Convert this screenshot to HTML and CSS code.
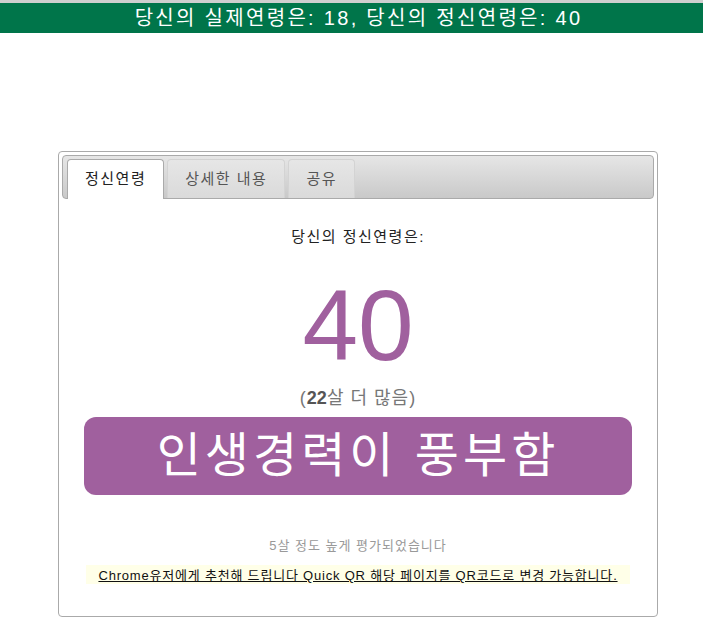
FILE: index.html
```html
<!DOCTYPE html>
<html lang="ko">
<head>
  <meta charset="UTF-8">
  <title>정신연령 테스트 결과</title>
  <link rel="stylesheet" href="styles.css">
</head>
<body>

<div class="topbar">당신의 실제연령은: 18, 당신의 정신연령은: 40</div>

<div class="card">
  <ul class="tabs">
    <li class="tab active">정신연령</li>
    <li class="tab">상세한 내용</li>
    <li class="tab">공유</li>
  </ul>

  <div class="panel">
    <p class="label">당신의 정신연령은:</p>
    <div class="age">40</div>
    <p class="diff">(<b>22</b>살 더 많음)</p>
    <div class="verdict">인생경력이 풍부함</div>
    <p class="note">5살 정도 높게 평가되었습니다</p>
    <p class="promo"><a href="#">Chrome유저에게 추천해 드립니다 Quick QR 해당 페이지를 QR코드로 변경 가능합니다.</a></p>
  </div>
</div>

</body>
</html>
```

FILE: styles.css
```css
body {
  margin: 0;
  font-family: "Liberation Sans", "Noto Sans CJK KR", sans-serif;
  color: #222;
  background: #fff;
}

.topbar {
  border-top: 3px solid #cfcfcf;
  background: #00754a;
  color: #fff;
  height: 30px;
  line-height: 30px;
  padding-left: 14px;
  font-size: 20px;
  letter-spacing: 2.3px;
  text-align: center;
}

.card {
  width: 592px;
  margin: 118px 0 0 58px;
  padding: 3px;
  border: 1px solid #aaa;
  border-radius: 4px;
}

.tabs {
  list-style: none;
  margin: 0;
  padding: 3px 0 0 4px;
  height: 39px;
  display: flex;
  gap: 3px;
  border: 1px solid #aaa;
  border-radius: 4px;
  background: linear-gradient(#e6e6e6, #c9c9c9);
}

.tab {
  height: 38px;
  line-height: 38px;
  padding: 0 17px 0 17px;
  font-size: 15px;
  letter-spacing: 1.5px;
  color: #555;
  border: 1px solid #d3d3d3;
  border-bottom: 0;
  border-radius: 4px 4px 0 0;
  background: linear-gradient(#e6e6e6, #dadada);
}

.tab.active {
  color: #222;
  background: #fff;
  border-color: #aaa;
  height: 39px;
}

.panel {
  text-align: center;
  padding: 28px 22px 29px;
}

.label {
  margin: 0;
  font-size: 15px;
  letter-spacing: 1.5px;
  line-height: 20px;
}

.age {
  margin-top: 28px;
  font-size: 100px;
  line-height: 100px;
  color: #a0609e;
}

.diff {
  margin: 11px 0 0;
  font-size: 18px;
  letter-spacing: 1px;
  line-height: 24px;
  color: #777;
}

.diff b {
  color: #555;
  letter-spacing: 0;
}

.verdict {
  margin: 7px auto 0;
  width: 548px;
  height: 78px;
  line-height: 78px;
  border-radius: 12px;
  background: #a0609e;
  color: #fff;
  font-size: 48px;
  letter-spacing: 4px;
}

.note {
  margin: 40px 0 0;
  font-size: 13px;
  letter-spacing: 1px;
  color: #999;
}

.promo {
  display: inline-block;
  margin: 11px 0 0;
  padding: 0 12px;
  background: #ffffe8;
  font-size: 13px;
  letter-spacing: 0.8px;
}

.promo a {
  color: #111;
}
```
